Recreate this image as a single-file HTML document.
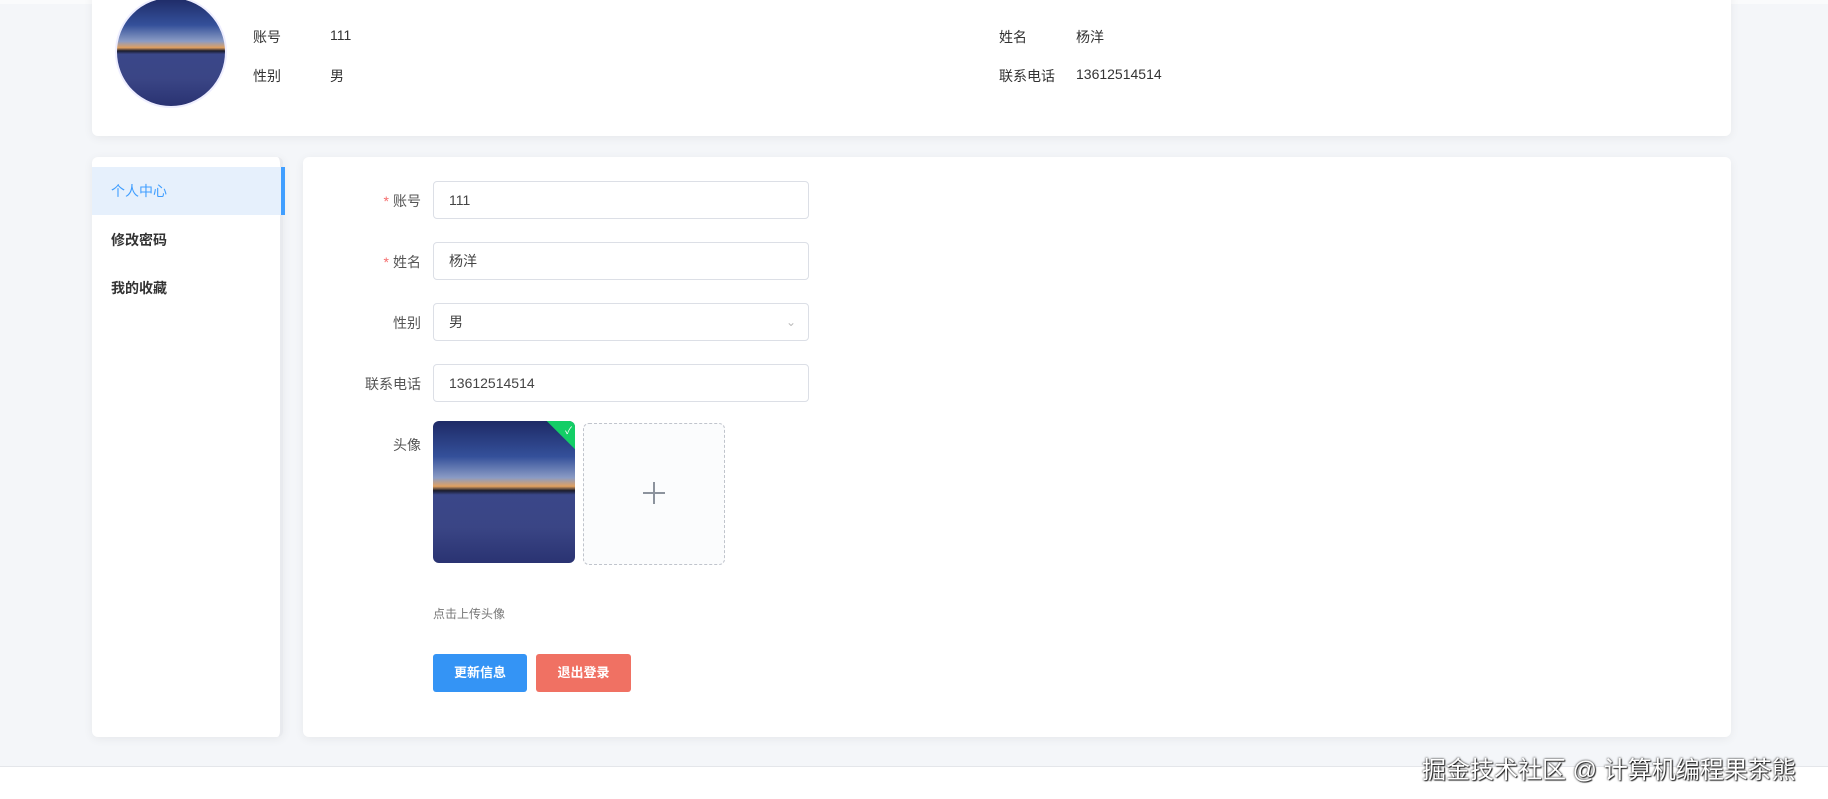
<!DOCTYPE html>
<html><head><meta charset="utf-8"><style>
*{box-sizing:border-box;margin:0;padding:0}
body{width:1828px;height:799px;overflow:hidden;background:#f4f6f9;font-family:"Liberation Sans","Noto Sans CJK SC",sans-serif;font-size:14px;color:#333;position:relative}
.abs{position:absolute}
.card{background:#fff;border-radius:6px;box-shadow:0 2px 10px rgba(0,0,0,.06)}
.img{background:linear-gradient(180deg,#1e2a66 0%,#34509a 25%,#8a9bc4 40%,#e0a060 46%,#1a1c2c 49%,#3a4789 52%,#3a4585 75%,#2a3372 100%)}
.lbl{position:absolute;width:120px;text-align:right;left:301px;color:#555}
.inp{position:absolute;left:433px;width:376px;height:38px;border:1px solid #dcdfe6;border-radius:4px;padding-left:15px;line-height:36px;color:#444}
.star{color:#f56c6c;margin-right:4px}
.btn{position:absolute;top:654px;height:38px;border-radius:3px;color:#fff;font-weight:bold;font-size:13px;text-align:center;line-height:38px}
</style></head><body>
<div class="abs" style="left:0;top:0;width:1828px;height:4px;background:#fafbfc"></div>
<div class="abs card" style="left:92px;top:-10px;width:1639px;height:146px"></div>
<div class="abs img" style="left:115px;top:-4px;width:112px;height:112px;border-radius:50%;border:2px solid #eef"></div>
<div class="abs" style="left:253px;top:27px">账号</div>
<div class="abs" style="left:330px;top:27px">111</div>
<div class="abs" style="left:253px;top:66px">性别</div>
<div class="abs" style="left:330px;top:66px">男</div>
<div class="abs" style="left:999px;top:27px">姓名</div>
<div class="abs" style="left:1076px;top:27px">杨洋</div>
<div class="abs" style="left:999px;top:66px">联系电话</div>
<div class="abs" style="left:1076px;top:66px">13612514514</div>

<div class="abs card" style="left:92px;top:157px;width:191px;height:580px;border-right:3px solid #e8eaee"></div>
<div class="abs" style="left:92px;top:167px;width:193px;height:48px;background:#e6f0fc;border-right:4px solid #409eff"></div>
<div class="abs" style="left:111px;top:181px;color:#409eff">个人中心</div>
<div class="abs" style="left:111px;top:230px;font-weight:bold">修改密码</div>
<div class="abs" style="left:111px;top:278px;font-weight:bold">我的收藏</div>

<div class="abs card" style="left:303px;top:157px;width:1428px;height:580px"></div>
<div class="lbl" style="top:191px"><span class="star">*</span>账号</div>
<div class="inp" style="top:181px">111</div>
<div class="lbl" style="top:252px"><span class="star">*</span>姓名</div>
<div class="inp" style="top:242px">杨洋</div>
<div class="lbl" style="top:313px">性别</div>
<div class="inp" style="top:303px">男<span style="position:absolute;right:12px;top:0;color:#bbb;font-size:12px">&#8964;</span></div>
<div class="lbl" style="top:374px">联系电话</div>
<div class="inp" style="top:364px">13612514514</div>
<div class="lbl" style="top:435px">头像</div>
<div class="abs img" style="left:433px;top:421px;width:142px;height:142px;border-radius:6px;overflow:hidden"><div style="position:absolute;right:-20px;top:-20px;width:40px;height:40px;background:#13ce66;transform:rotate(45deg)"></div><div style="position:absolute;right:3px;top:1px;color:#fff;font-size:10px">✓</div></div>
<div class="abs" style="left:583px;top:423px;width:142px;height:142px;border:1px dashed #c0c4cc;border-radius:6px;background:#fbfcfd"></div>
<div class="abs" style="left:643px;top:492px;width:22px;height:2px;background:#8c939d"></div>
<div class="abs" style="left:653px;top:482px;width:2px;height:22px;background:#8c939d"></div>
<div class="abs" style="left:433px;top:605px;font-size:12px;color:#777">点击上传头像</div>
<div class="btn" style="left:433px;width:94px;background:#3494f5">更新信息</div>
<div class="btn" style="left:536px;width:95px;background:#f07163">退出登录</div>

<div class="abs" style="left:0;top:766px;width:1828px;height:33px;background:#fff;border-top:1px solid #e4e6ea"></div>
<div class="abs" style="left:1422px;top:750px;font-size:24px;color:#fff;text-shadow:0 0 2px #000,1px 1px 1px #333;white-space:nowrap">掘金技术社区 @ 计算机编程果茶熊</div>
</body></html>
